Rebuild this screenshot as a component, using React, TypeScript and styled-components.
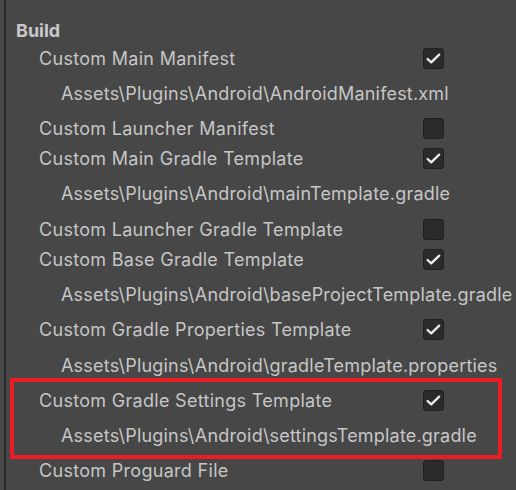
import React from "react";
import styled, { createGlobalStyle } from "styled-components";

const Global = createGlobalStyle`
  html, body { margin: 0; padding: 0; background: #474747; }
  body { font-family: Inter, "Noto Sans", sans-serif; }
`;

const Page = styled.div`
  display: flex;
  width: 516px;
  height: 490px;
  overflow: hidden;
  background: #474747;
`;

const Gutter = styled.div`
  width: 4px;
  flex: none;
`;

const Divider = styled.div`
  width: 2px;
  flex: none;
  background: #2c2c2c;
`;

const Content = styled.div`
  flex: 1;
  min-width: 0;
  display: flex;
  flex-direction: column;
  padding-top: 19px;
  padding-left: 10px;
`;

const SectionTitle = styled.div`
  font-size: 18px;
  font-weight: 700;
  line-height: 24px;
  color: #c8c8c8;
`;

const Row = styled.div<{ $kind: "label" | "path" }>`
  display: flex;
  align-items: center;
  justify-content: space-between;
  height: ${(p) => (p.$kind === "label" ? "30px" : "40.6px")};
  padding-left: ${(p) => (p.$kind === "label" ? "23px" : "45px")};
  padding-right: 72px;
  font-size: 18px;
  letter-spacing: ${(p) => (p.$kind === "label" ? "0.3px" : "0.2px")};
  color: #c6c6c6;
  white-space: nowrap;
`;

const Highlight = styled.div`
  position: relative;
  &::before {
    content: "";
    position: absolute;
    left: -6.5px;
    right: 14px;
    top: -7.5px;
    bottom: -3px;
    border: 4px solid #ed1c24;
    pointer-events: none;
    z-index: 1;
  }
`;

const Box = styled.div`
  width: 21px;
  height: 21px;
  box-sizing: border-box;
  border-radius: 3px;
  background: #2b2b2b;
  border: 1px solid #202020;
  display: flex;
  align-items: center;
  justify-content: center;
  flex: none;
`;

const Check = ({ on }: { on: boolean }) => (
  <Box>
    {on && (
      <svg width="21" height="21" viewBox="0 0 21 21" style={{ margin: -1 }}>
        <path
          d="M4.6 11 L8.2 14.4 L16.2 6.6"
          fill="none"
          stroke="#ececec"
          strokeWidth="2.3"
          strokeLinecap="round"
          strokeLinejoin="round"
        />
      </svg>
    )}
  </Box>
);

type Item = { label: string; checked: boolean; path?: string };

const items: Item[] = [
  { label: "Custom Main Manifest", checked: true, path: "Assets\\Plugins\\Android\\AndroidManifest.xml" },
  { label: "Custom Launcher Manifest", checked: false },
  { label: "Custom Main Gradle Template", checked: true, path: "Assets\\Plugins\\Android\\mainTemplate.gradle" },
  { label: "Custom Launcher Gradle Template", checked: false },
  { label: "Custom Base Gradle Template", checked: true, path: "Assets\\Plugins\\Android\\baseProjectTemplate.gradle" },
  { label: "Custom Gradle Properties Template", checked: true, path: "Assets\\Plugins\\Android\\gradleTemplate.properties" },
  { label: "Custom Gradle Settings Template", checked: true, path: "Assets\\Plugins\\Android\\settingsTemplate.gradle" },
  { label: "Custom Proguard File", checked: false },
];

const Entry = ({ item }: { item: Item }) => (
  <>
    <Row $kind="label">
      <span>{item.label}</span>
      <Check on={item.checked} />
    </Row>
    {item.path && (
      <Row $kind="path">
        <span>{item.path}</span>
      </Row>
    )}
  </>
);

export default function App() {
  return (
    <>
      <Global />
      <Page>
        <Gutter />
        <Divider />
        <Content>
          <SectionTitle>Build</SectionTitle>
          {items.map((item) =>
            item.label === "Custom Gradle Settings Template" ? (
              <Highlight key={item.label}>
                <Entry item={item} />
              </Highlight>
            ) : (
              <Entry key={item.label} item={item} />
            )
          )}
        </Content>
      </Page>
    </>
  );
}
